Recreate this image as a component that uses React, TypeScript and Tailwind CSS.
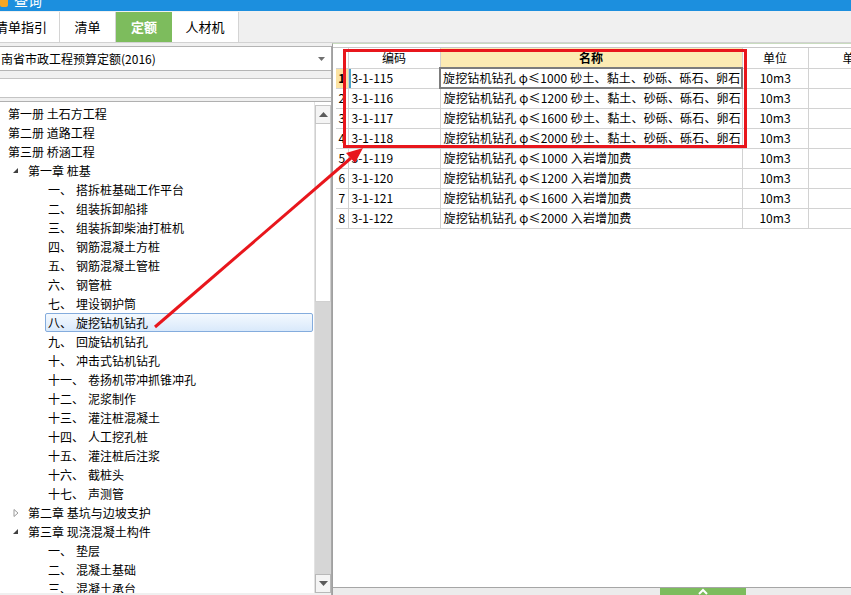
const FONT = { fontFamily: '"Noto Sans CJK SC", "Liberation Sans", sans-serif' };

type TreeItem = { kind: 'vol' | 'open' | 'closed' | 'sub'; text: string; num?: string; selected?: boolean };

const tree: TreeItem[] = [
  { kind: 'vol', text: '第一册 土石方工程' },
  { kind: 'vol', text: '第二册 道路工程' },
  { kind: 'vol', text: '第三册 桥涵工程' },
  { kind: 'open', text: '第一章 桩基' },
  { kind: 'sub', num: '一', text: '搭拆桩基础工作平台' },
  { kind: 'sub', num: '二', text: '组装拆卸船排' },
  { kind: 'sub', num: '三', text: '组装拆卸柴油打桩机' },
  { kind: 'sub', num: '四', text: '钢筋混凝土方桩' },
  { kind: 'sub', num: '五', text: '钢筋混凝土管桩' },
  { kind: 'sub', num: '六', text: '钢管桩' },
  { kind: 'sub', num: '七', text: '埋设钢护筒' },
  { kind: 'sub', num: '八', text: '旋挖钻机钻孔', selected: true },
  { kind: 'sub', num: '九', text: '回旋钻机钻孔' },
  { kind: 'sub', num: '十', text: '冲击式钻机钻孔' },
  { kind: 'sub', num: '十一', text: '卷扬机带冲抓锥冲孔' },
  { kind: 'sub', num: '十二', text: '泥浆制作' },
  { kind: 'sub', num: '十三', text: '灌注桩混凝土' },
  { kind: 'sub', num: '十四', text: '人工挖孔桩' },
  { kind: 'sub', num: '十五', text: '灌注桩后注浆' },
  { kind: 'sub', num: '十六', text: '截桩头' },
  { kind: 'sub', num: '十七', text: '声测管' },
  { kind: 'closed', text: '第二章 基坑与边坡支护' },
  { kind: 'open', text: '第三章 现浇混凝土构件' },
  { kind: 'sub', num: '一', text: '垫层' },
  { kind: 'sub', num: '二', text: '混凝土基础' },
  { kind: 'sub', num: '三', text: '混凝土承台' },
];

const rows = [
  { code: '3-1-115', name: '旋挖钻机钻孔 φ≤1000 砂土、黏土、砂砾、砾石、卵石' },
  { code: '3-1-116', name: '旋挖钻机钻孔 φ≤1200 砂土、黏土、砂砾、砾石、卵石' },
  { code: '3-1-117', name: '旋挖钻机钻孔 φ≤1600 砂土、黏土、砂砾、砾石、卵石' },
  { code: '3-1-118', name: '旋挖钻机钻孔 φ≤2000 砂土、黏土、砂砾、砾石、卵石' },
  { code: '3-1-119', name: '旋挖钻机钻孔 φ≤1000 入岩增加费' },
  { code: '3-1-120', name: '旋挖钻机钻孔 φ≤1200 入岩增加费' },
  { code: '3-1-121', name: '旋挖钻机钻孔 φ≤1600 入岩增加费' },
  { code: '3-1-122', name: '旋挖钻机钻孔 φ≤2000 入岩增加费' },
];

function TreeRow({ item }: { item: TreeItem }) {
  if (item.kind === 'vol') {
    return <div className="h-[19px] flex items-center pl-[8px] whitespace-nowrap">{item.text}</div>;
  }
  if (item.kind === 'open' || item.kind === 'closed') {
    return (
      <div className="h-[19px] flex items-center pl-[12px] whitespace-nowrap">
        <svg width="8" height="8" viewBox="0 0 8 8" className="mr-[8px]">
          {item.kind === 'open' ? (
            <polygon points="6,1 6,6 1,6" fill="#404040" />
          ) : (
            <polygon points="2,0.5 6,4 2,7.5" fill="none" stroke="#9a9a9a" strokeWidth="1" />
          )}
        </svg>
        {item.text}
      </div>
    );
  }
  return (
    <div className="h-[19px] flex items-center whitespace-nowrap">
      <div
        className={
          item.selected
            ? 'ml-[45px] w-[268px] h-[19px] flex items-center pl-[2px] rounded-[2px] border border-[#84acdd] bg-gradient-to-b from-[#f4f9fe] to-[#d9e9fb]'
            : 'ml-[48px] flex items-center'
        }
      >
        <span>{item.num}、</span>
        <span className="ml-[4px]">{item.text}</span>
      </div>
    </div>
  );
}

function ScrollBar() {
  return (
    <div className="w-[17px] h-full flex flex-col bg-[#d6d6d6] border-l border-[#e2e2e2]">
      <div className="h-[3px] bg-white" />
      <div className="h-[19px] bg-[#f4f4f4] border border-[#c6c6c6] flex items-center justify-center">
        <svg width="9" height="5" viewBox="0 0 9 5"><polygon points="0,5 4.5,0 9,5" fill="#5a5a5a" /></svg>
      </div>
      <div className="h-[178px] bg-white border-x border-b border-[#d0d0d0]" />
      <div className="flex-1" />
      <div className="h-[19px] bg-[#f4f4f4] border border-[#b8b8b8] flex items-center justify-center">
        <svg width="9" height="5" viewBox="0 0 9 5"><polygon points="0,0 4.5,5 9,0" fill="#5a5a5a" /></svg>
      </div>
    </div>
  );
}

export default function App() {
  return (
    <div className="relative w-[851px] h-[595px] overflow-hidden bg-[#f0f0f0] text-[12px] text-black" style={FONT}>
      {/* title bar */}
      <div className="h-[11px] bg-[#1c8fde] overflow-hidden">
        <div className="-mt-[9px] flex items-center gap-[6px] text-white text-[14px] leading-[18px]">
          <div className="w-[8px] h-[14px] bg-[#f5a623] rounded-[2px]" />
          <span>查询</span>
        </div>
      </div>

      {/* tabs */}
      <div className="h-[32px] flex items-stretch pt-[1px] border-b border-[#d2d2d2] text-[13px]">
        <div className="w-[60px] bg-white border-r border-[#d4d4d4] flex items-center overflow-hidden">
          <span className="-ml-[5px] whitespace-nowrap">清单指引</span>
        </div>
        <div className="w-[56px] bg-white border-r border-[#d4d4d4] flex items-center justify-center">清单</div>
        <div className="w-[56px] bg-[#7dbc5d] text-white font-bold flex items-center justify-center">定额</div>
        <div className="w-[67px] bg-white border-r border-[#d4d4d4] flex items-center justify-center">人材机</div>
      </div>

      <div className="flex h-[552px]">
        {/* left panel */}
        <div className="w-[332px] mt-[3px] flex flex-col border-r border-[#a8a8a8]">
          <div className="h-[25px] bg-white border-y border-[#b4b4b4] flex items-center justify-between pr-[6px]">
            <span className="pl-[1px] whitespace-nowrap">南省市政工程预算定额(2016)</span>
            <svg width="7" height="4" viewBox="0 0 7 4"><polygon points="0,0 3.5,4 7,0" fill="#707070" /></svg>
          </div>
          <div className="h-[7px]" />
          <div className="h-[20px] bg-white border-y border-[#c4c4c4]" />
          <div className="h-[3px]" />
          <div className="flex-1 flex bg-white border-t border-[#b0b0b0] overflow-hidden mb-[2px]">
            <div className="w-[314px] pt-[2px] overflow-hidden">
              {tree.map((item, i) => (
                <TreeRow key={i} item={item} />
              ))}
            </div>
            <ScrollBar />
          </div>
        </div>

        <div className="w-[3px]" />

        {/* right panel */}
        <div className="flex-1 flex flex-col border-l border-[#a0a0a0] border-t border-t-[#c9dcbf] bg-white">
          <div className="h-[4px] border-b border-[#c8c8c8]" />
          <div className="relative flex-1 pl-[3px]">
            <table className="border-collapse table-fixed text-[12px]" style={{ width: 560 }}>
              <colgroup>
                <col style={{ width: 12 }} />
                <col style={{ width: 92 }} />
                <col style={{ width: 302 }} />
                <col style={{ width: 66 }} />
                <col style={{ width: 88 }} />
              </colgroup>
              <thead>
                <tr className="h-[20px]">
                  <th className="border-r border-b border-[#d2d2d2] font-normal" />
                  <th className="border-r border-b border-[#d2d2d2] font-normal text-center">编码</th>
                  <th className="border-r border-b border-[#d2d2d2] bg-[#fcebb3] font-bold text-center">名称</th>
                  <th className="border-r border-b border-[#d2d2d2] font-normal text-center">单位</th>
                  <th className="border-b border-[#d2d2d2] font-normal text-left pl-[34px]">单</th>
                </tr>
              </thead>
              <tbody>
                {rows.map((r, i) => (
                  <tr key={r.code} className="h-[20px]">
                    <td
                      className={
                        i === 0
                          ? 'border-r border-b border-[#d2d2d2] bg-[#fce3a2] font-bold text-center p-0'
                          : 'border-r border-b border-[#d2d2d2] text-center p-0'
                      }
                    >
                      {i + 1}
                    </td>
                    <td
                      className={
                        i === 0
                          ? 'border-r border-b border-[#d2d2d2] pl-[3px] p-0 whitespace-nowrap shadow-[inset_2px_0_0_#4aa3c9]'
                          : 'border-r border-b border-[#d2d2d2] pl-[3px] p-0 whitespace-nowrap'
                      }
                    >
                      {r.code}
                    </td>
                    <td
                      className={
                        i === 0
                          ? 'border-2 border-[#7c7c7c] pl-[2px] p-0 whitespace-nowrap overflow-hidden tracking-[0.15px]'
                          : 'border-r border-b border-[#d2d2d2] pl-[3px] p-0 whitespace-nowrap overflow-hidden tracking-[0.15px]'
                      }
                    >
                      {r.name}
                    </td>
                    <td className="border-r border-b border-[#d2d2d2] text-center p-0">10m3</td>
                    <td className="border-b border-[#d2d2d2] p-0" />
                  </tr>
                ))}
              </tbody>
            </table>
            {/* red highlight box */}
            <div className="absolute left-[10px] top-[1px] w-[404px] h-[99px] border-[3px] border-[#e8161c] pointer-events-none" />
          </div>
          {/* bottom strip */}
          <div className="h-[8px] border-t border-[#a6a6a6] bg-[#ececec] flex">
            <div className="ml-[327px] w-[86px] bg-[#7dbc5d] flex justify-center">
              <svg width="12" height="7" viewBox="0 0 12 7"><polyline points="2,6 6,2 10,6" fill="none" stroke="white" strokeWidth="2" /></svg>
            </div>
          </div>
        </div>
      </div>

      {/* red arrow annotation */}
      <svg className="absolute left-0 top-0 pointer-events-none" width="851" height="595">
        <line x1="155" y1="327" x2="351" y2="158" stroke="#e8161c" strokeWidth="3" />
        <polygon points="363,148 355,163 346,153" fill="#e8161c" />
      </svg>
    </div>
  );
}
